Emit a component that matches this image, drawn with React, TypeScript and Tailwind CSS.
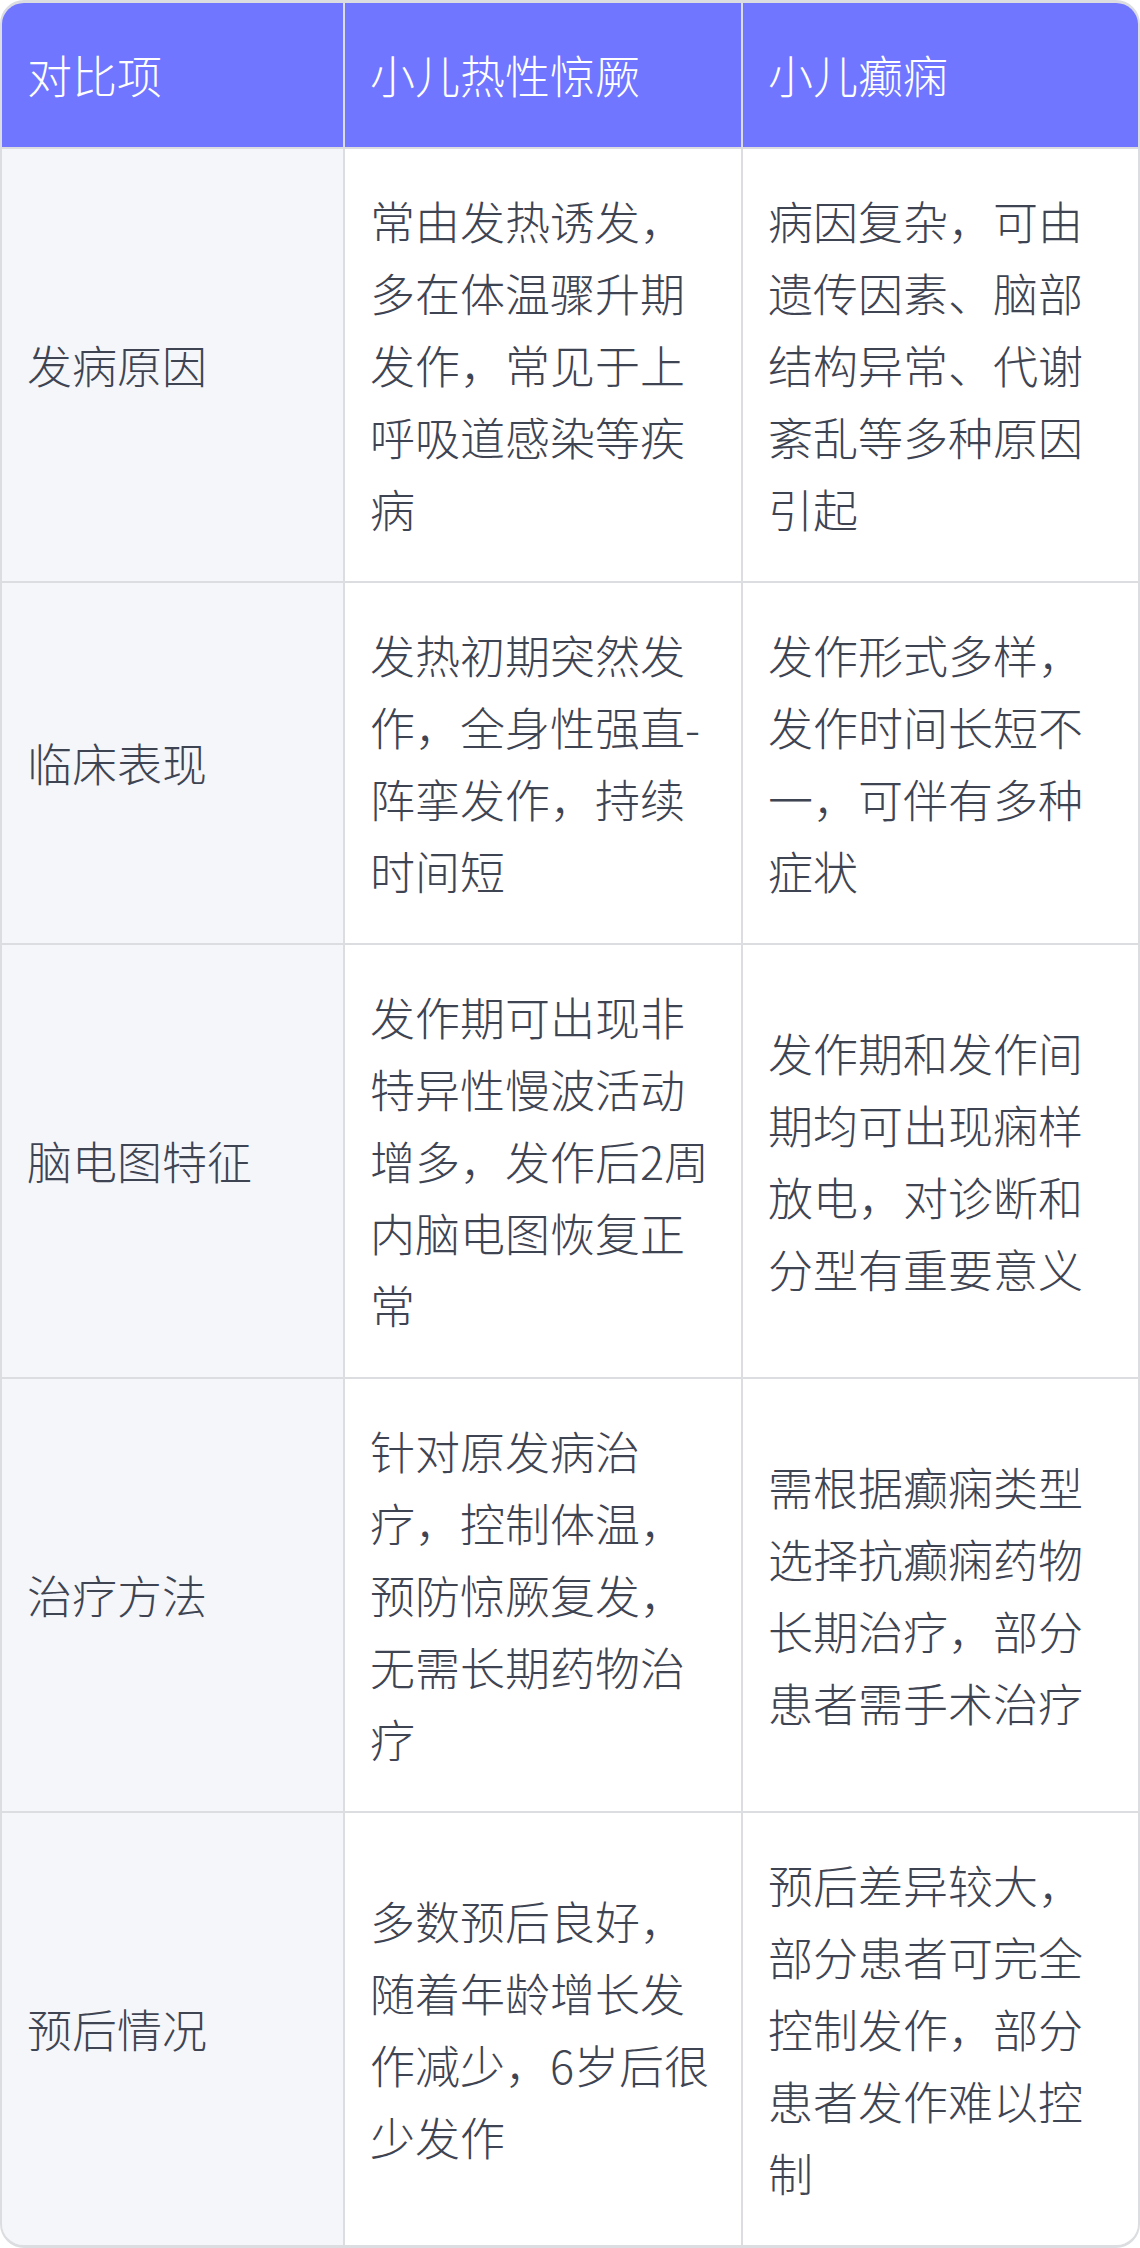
import React from "react";

const headers = ["对比项", "小儿热性惊厥", "小儿癫痫"];

const rows = [
  {
    label: "发病原因",
    a: "常由发热诱发，多在体温骤升期发作，常见于上呼吸道感染等疾病",
    b: "病因复杂，可由遗传因素、脑部结构异常、代谢紊乱等多种原因引起",
  },
  {
    label: "临床表现",
    a: "发热初期突然发作，全身性强直-阵挛发作，持续时间短",
    b: "发作形式多样，发作时间长短不一，可伴有多种症状",
  },
  {
    label: "脑电图特征",
    a: "发作期可出现非特异性慢波活动增多，发作后2周内脑电图恢复正常",
    b: "发作期和发作间期均可出现痫样放电，对诊断和分型有重要意义",
  },
  {
    label: "治疗方法",
    a: "针对原发病治疗，控制体温，预防惊厥复发，无需长期药物治疗",
    b: "需根据癫痫类型选择抗癫痫药物长期治疗，部分患者需手术治疗",
  },
  {
    label: "预后情况",
    a: "多数预后良好，随着年龄增长发作减少，6岁后很少发作",
    b: "预后差异较大，部分患者可完全控制发作，部分患者发作难以控制",
  },
];

const App = () => {
  return (
    <div
      className="w-[1140px] bg-white"
      style={{ fontFamily: '"Noto Sans CJK SC", "Noto Sans", sans-serif' }}
    >
      <div className="rounded-[24px] border-x-2 border-y-[3px] border-[#dcdde1] overflow-hidden">
        <div className="grid grid-cols-[341px_396px_1fr] gap-[2px] bg-[#dcdde1] text-[45px] leading-[72px] font-light">
          {/* Header */}
          {headers.map((h) => (
            <div key={h} className="bg-[#7076ff] text-white px-[25px] py-[36px] flex items-center">
              {h}
            </div>
          ))}

          {/* Body rows */}
          {rows.map((r) => (
            <React.Fragment key={r.label}>
              <div className="bg-[#f4f6fa] text-[#3f4452] px-[25px] py-[36px] flex items-center">
                {r.label}
              </div>
              <div className="bg-white text-[#3f4452] px-[25px] py-[36px] flex items-center">
                <p>{r.a}</p>
              </div>
              <div className="bg-white text-[#3f4452] px-[25px] py-[36px] flex items-center">
                <p>{r.b}</p>
              </div>
            </React.Fragment>
          ))}
        </div>
      </div>
    </div>
  );
};

export default App;
